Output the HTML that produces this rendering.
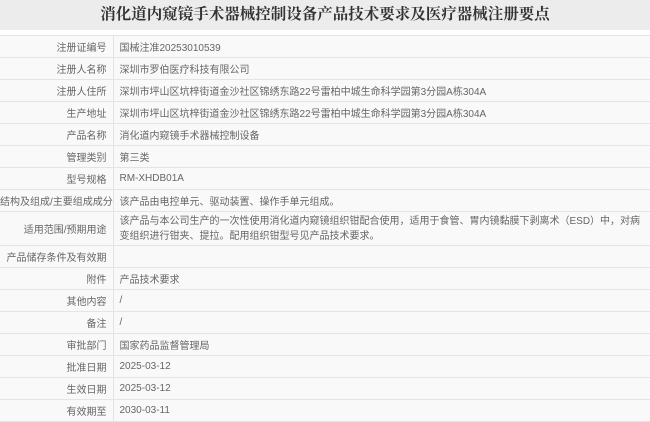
<!DOCTYPE html>
<html><head><meta charset="utf-8"><style>
body{margin:0;width:650px;height:420px;overflow:hidden;background:#fff;font-family:"Liberation Sans","Noto Sans CJK SC",sans-serif;color:#666;font-size:10px}
.t{height:30px;background:#ececec;text-align:center;font-size:15.5px;font-weight:bold;color:#333;line-height:30px;font-family:"Liberation Sans","Noto Serif CJK SC",serif}
table{position:absolute;top:35px;left:0;width:650px;border-collapse:collapse;table-layout:fixed}
td{border-top:1px solid #e4e4e4;border-bottom:1px solid #e4e4e4;background:#f9f9f9;height:22px;padding:0 6px;box-sizing:border-box;white-space:nowrap;overflow:hidden}
td.l{width:113px;text-align:right;border-right:1px solid #e4e4e4;padding:0 6px 0 0}
td.v{line-height:15px;white-space:normal}
</style></head><body>
<div class="t">消化道内窥镜手术器械控制设备产品技术要求及医疗器械注册要点</div>
<table>
<tr><td class="l">注册证编号</td><td>国械注准20253010539</td></tr>
<tr><td class="l">注册人名称</td><td>深圳市罗伯医疗科技有限公司</td></tr>
<tr><td class="l">注册人住所</td><td>深圳市坪山区坑梓街道金沙社区锦绣东路22号雷柏中城生命科学园第3分园A栋304A</td></tr>
<tr><td class="l">生产地址</td><td>深圳市坪山区坑梓街道金沙社区锦绣东路22号雷柏中城生命科学园第3分园A栋304A</td></tr>
<tr><td class="l">产品名称</td><td>消化道内窥镜手术器械控制设备</td></tr>
<tr><td class="l">管理类别</td><td>第三类</td></tr>
<tr><td class="l">型号规格</td><td>RM-XHDB01A</td></tr>
<tr><td class="l" style="padding-right:2px">结构及组成/主要组成成分</td><td>该产品由电控单元、驱动装置、操作手单元组成。</td></tr>
<tr><td class="l" style="height:34px">适用范围/预期用途</td><td class="v" style="height:34px">该产品与本公司生产的一次性使用消化道内窥镜组织钳配合使用，适用于食管、胃内镜黏膜下剥离术（ESD）中，对病变组织进行钳夹、提拉。配用组织钳型号见产品技术要求。</td></tr>
<tr><td class="l">产品储存条件及有效期</td><td></td></tr>
<tr><td class="l">附件</td><td>产品技术要求</td></tr>
<tr><td class="l">其他内容</td><td>/</td></tr>
<tr><td class="l">备注</td><td>/</td></tr>
<tr><td class="l">审批部门</td><td>国家药品监督管理局</td></tr>
<tr><td class="l">批准日期</td><td>2025-03-12</td></tr>
<tr><td class="l">生效日期</td><td>2025-03-12</td></tr>
<tr><td class="l">有效期至</td><td>2030-03-11</td></tr>
</table>
</body></html>
